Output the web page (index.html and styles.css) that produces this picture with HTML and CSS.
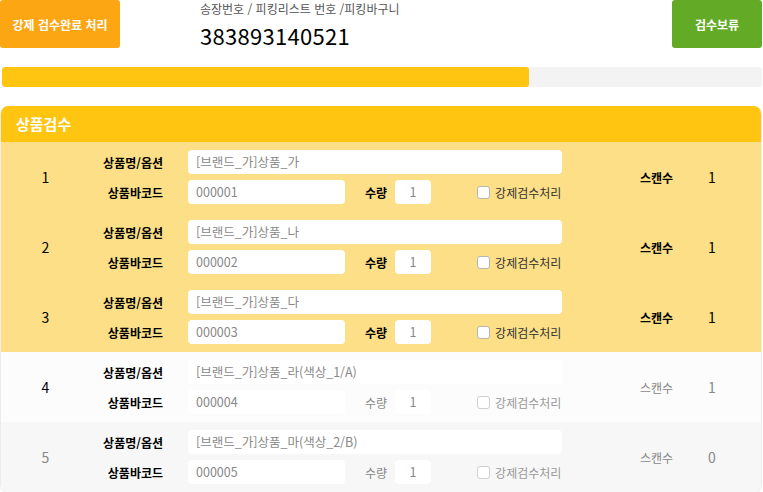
FILE: index.html
```html
<!DOCTYPE html>
<html lang="ko">
<head>
<meta charset="utf-8">
<link rel="stylesheet" href="styles.css">
</head>
<body>
<div class="top">
  <button class="btn btn-force">강제 검수완료 처리</button>
  <div class="info">
    <div class="info-label">송장번호 / 피킹리스트 번호 /피킹바구니</div>
    <div class="info-value">383893140521</div>
  </div>
  <button class="btn btn-hold">검수보류</button>
</div>
<div class="progress"><div class="progress-fill" style="width:69.4%"></div></div>
<div class="panel">
  <div class="panel-head">상품검수</div>
  <div class="row done">
    <div class="num">1</div>
    <div class="fields">
      <div class="line"><span class="lbl">상품명/옵션</span><span class="inp inp-name">[브랜드_가]상품_가</span></div>
      <div class="line"><span class="lbl">상품바코드</span><span class="inp inp-code">000001</span><span class="qty-lbl">수량</span><span class="inp inp-qty">1</span><span class="chk"><span class="box"></span>강제검수처리</span></div>
    </div>
    <div class="scan"><span class="scan-lbl">스캔수</span><span class="scan-val">1</span></div>
  </div>
  <div class="row done">
    <div class="num">2</div>
    <div class="fields">
      <div class="line"><span class="lbl">상품명/옵션</span><span class="inp inp-name">[브랜드_가]상품_나</span></div>
      <div class="line"><span class="lbl">상품바코드</span><span class="inp inp-code">000002</span><span class="qty-lbl">수량</span><span class="inp inp-qty">1</span><span class="chk"><span class="box"></span>강제검수처리</span></div>
    </div>
    <div class="scan"><span class="scan-lbl">스캔수</span><span class="scan-val">1</span></div>
  </div>
  <div class="row done">
    <div class="num">3</div>
    <div class="fields">
      <div class="line"><span class="lbl">상품명/옵션</span><span class="inp inp-name">[브랜드_가]상품_다</span></div>
      <div class="line"><span class="lbl">상품바코드</span><span class="inp inp-code">000003</span><span class="qty-lbl">수량</span><span class="inp inp-qty">1</span><span class="chk"><span class="box"></span>강제검수처리</span></div>
    </div>
    <div class="scan"><span class="scan-lbl">스캔수</span><span class="scan-val">1</span></div>
  </div>
  <div class="row idle">
    <div class="num">4</div>
    <div class="fields">
      <div class="line"><span class="lbl">상품명/옵션</span><span class="inp inp-name">[브랜드_가]상품_라(색상_1/A)</span></div>
      <div class="line"><span class="lbl">상품바코드</span><span class="inp inp-code">000004</span><span class="qty-lbl">수량</span><span class="inp inp-qty">1</span><span class="chk"><span class="box"></span>강제검수처리</span></div>
    </div>
    <div class="scan"><span class="scan-lbl">스캔수</span><span class="scan-val">1</span></div>
  </div>
  <div class="row idle alt">
    <div class="num">5</div>
    <div class="fields">
      <div class="line"><span class="lbl">상품명/옵션</span><span class="inp inp-name">[브랜드_가]상품_마(색상_2/B)</span></div>
      <div class="line"><span class="lbl">상품바코드</span><span class="inp inp-code">000005</span><span class="qty-lbl">수량</span><span class="inp inp-qty">1</span><span class="chk"><span class="box"></span>강제검수처리</span></div>
    </div>
    <div class="scan"><span class="scan-lbl">스캔수</span><span class="scan-val">0</span></div>
  </div>
</div>
</body>
</html>
```

FILE: styles.css
```css
* { box-sizing: border-box; }
body {
  margin: 0;
  width: 763px;
  font-family: "Noto Sans CJK KR", "Noto Sans", sans-serif;
  color: #000;
  background: #fff;
}
.top {
  display: flex;
  align-items: flex-start;
  height: 48px;
}
.btn {
  border: 0;
  border-radius: 3px;
  color: #fff;
  font-family: inherit;
  font-weight: bold;
  font-size: 12px;
  height: 48px;
  padding: 0;
}
.btn-force { width: 120px; background: #fda614; }
.btn-hold { width: 90px; background: #63ab27; margin-left: auto; margin-right: 1px; }
.info { margin-left: 80px; }
.info-label { font-size: 12px; color: #555; line-height: 18px; }
.info-value { font-size: 22px; line-height: 30px; margin-top: 2px; letter-spacing: 0.3px; }
.progress {
  margin: 19px 1px 0 2px;
  height: 20px;
  background: #f3f3f3;
  border-radius: 3px;
  overflow: hidden;
}
.progress-fill { height: 100%; background: #ffc510; border-radius: 3px; }
.panel {
  margin-top: 19px;
  width: 762px;
  border: 1px solid #ececec;
  border-top: 0;
  border-radius: 8px;
  overflow: hidden;
}
.panel-head {
  height: 36px;
  background: #ffc510;
  color: #fff;
  font-weight: bold;
  font-size: 15px;
  line-height: 36px;
  padding-left: 15px;
}
.row {
  display: flex;
  align-items: center;
  height: 70px;
  background: #fcdf86;
}
.row.idle { background: #fcfcfc; }
.row.idle.alt { background: #f7f7f7; }
.num {
  width: 89px;
  text-align: center;
  font-size: 14px;
}
.fields { display: flex; flex-direction: column; gap: 6px; }
.line { display: flex; align-items: center; height: 24px; white-space: nowrap; }
.lbl {
  width: 73px;
  text-align: right;
  font-size: 12px;
  font-weight: bold;
  margin-right: 25px;
}
.inp {
  height: 24px;
  background: #fff;
  border-radius: 4px;
  font-size: 12.5px;
  color: #888;
  line-height: 24px;
  padding-left: 8px;
}
.inp-name { width: 374px; }
.inp-code { width: 157px; }
.qty-lbl { font-size: 12px; font-weight: bold; margin-left: 20px; }
.inp-qty { width: 36px; margin-left: 8px; padding-left: 0; text-align: center; }
.chk {
  display: flex;
  align-items: center;
  margin-left: 46px;
  font-size: 12px;
  color: #333;
}
.box {
  width: 13px;
  height: 13px;
  border: 1px solid #b5b5b5;
  border-radius: 3px;
  background: #fff;
  margin-right: 5px;
}
.scan { display: flex; align-items: center; margin-left: 78px; font-size: 12px; white-space: nowrap; }
.scan-lbl { font-weight: bold; width: 68px; }
.scan-val { font-size: 14px; }
.row.idle .chk { color: #999; }
.row.idle .box { border-color: #cfcfcf; }
.row.idle .qty-lbl, .row.idle .scan-lbl { color: #888; font-weight: normal; }
.row.idle .scan-val { color: #888; }
.row.idle.alt .num { color: #888; }
```
